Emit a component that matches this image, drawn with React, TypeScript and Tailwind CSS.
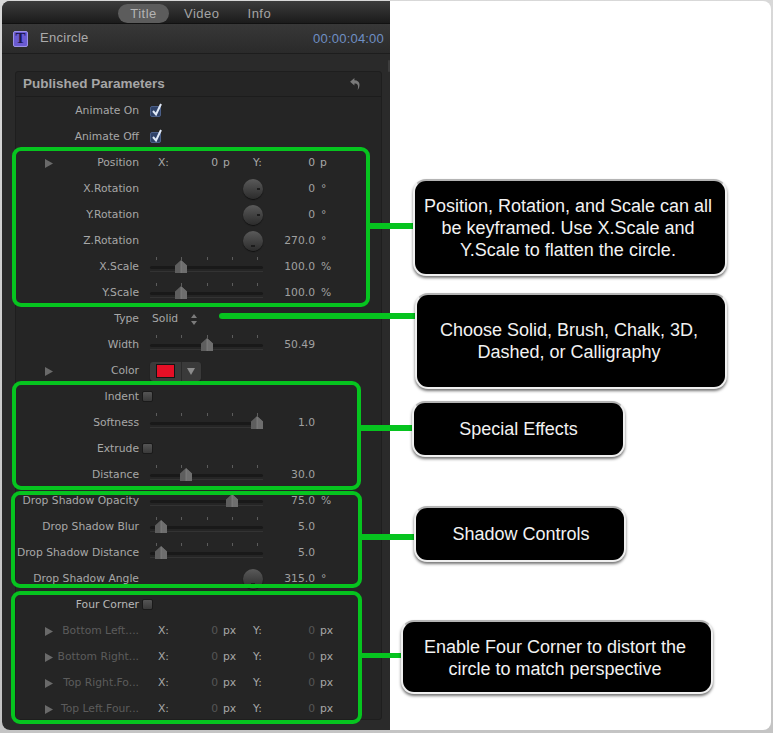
import React from 'react';

const labelFont = "font-['DejaVu_Sans',sans-serif]";

type Param =
  | { kind: 'check'; label: string; checked?: boolean; bright?: boolean }
  | { kind: 'xy'; label: string; unit: string; dim?: boolean }
  | { kind: 'dial'; label: string; value: string; unit?: string; dot: string }
  | { kind: 'slider'; label: string; value: string; unit?: string; thumb: number }
  | { kind: 'type'; label: string }
  | { kind: 'color'; label: string };

const params: Param[] = [
  { kind: 'check', label: 'Animate On', checked: true },
  { kind: 'check', label: 'Animate Off', checked: true },
  { kind: 'xy', label: 'Position', unit: 'p' },
  { kind: 'dial', label: 'X.Rotation', value: '0', unit: '°', dot: 'right' },
  { kind: 'dial', label: 'Y.Rotation', value: '0', unit: '°', dot: 'right' },
  { kind: 'dial', label: 'Z.Rotation', value: '270.0', unit: '°', dot: 'bottom' },
  { kind: 'slider', label: 'X.Scale', value: '100.0', unit: '%', thumb: 31 },
  { kind: 'slider', label: 'Y.Scale', value: '100.0', unit: '%', thumb: 31 },
  { kind: 'type', label: 'Type' },
  { kind: 'slider', label: 'Width', value: '50.49', thumb: 57 },
  { kind: 'color', label: 'Color' },
  { kind: 'check', label: 'Indent' },
  { kind: 'slider', label: 'Softness', value: '1.0', thumb: 107 },
  { kind: 'check', label: 'Extrude' },
  { kind: 'slider', label: 'Distance', value: '30.0', thumb: 36 },
  { kind: 'slider', label: 'Drop Shadow Opacity', value: '75.0', unit: '%', thumb: 82 },
  { kind: 'slider', label: 'Drop Shadow Blur', value: '5.0', thumb: 11 },
  { kind: 'slider', label: 'Drop Shadow Distance', value: '5.0', thumb: 11 },
  { kind: 'dial', label: 'Drop Shadow Angle', value: '315.0', unit: '°', dot: 'bottom' },
  { kind: 'check', label: 'Four Corner', bright: true },
  { kind: 'xy', label: 'Bottom Left....', unit: 'px', dim: true },
  { kind: 'xy', label: 'Bottom Right...', unit: 'px', dim: true },
  { kind: 'xy', label: 'Top Right.Fo...', unit: 'px', dim: true },
  { kind: 'xy', label: 'Top Left.Four...', unit: 'px', dim: true },
];

const Disclosure = () => (
  <svg width="8" height="9" viewBox="0 0 8 9" className="absolute left-[30px] top-[9px]">
    <path d="M0 0 L8 4.5 L0 9 Z" fill="#6a6a6a" />
  </svg>
);

const Slider = ({ thumb }: { thumb: number }) => (
  <div className="relative w-[113px] h-[26px]">
    {[6, 31, 57, 82, 107].map((x) => (
      <div key={x} className="absolute top-[3px] w-px h-[3px] bg-[#5c5c5c]" style={{ left: x }} />
    ))}
    <div className="absolute left-0 right-0 top-[12px] h-[3px] rounded-full bg-[#191919]" />
    <div className="absolute left-0 right-0 top-[17px] h-px bg-[#333333]" />
    <svg width="12" height="13" viewBox="0 0 12 13" className="absolute top-[6px]" style={{ left: thumb - 6 }}>
      <path d="M6 0 L12 5.5 V13 H0 V5.5 Z" fill="#5e5e5e" />
      <path d="M6 0 L12 5.5 V13 H6 Z" fill="#6e6e6e" />
      <path d="M6 1 V13" stroke="#8a8a8a" strokeWidth="0.6" />
    </svg>
  </div>
);

const Dial = ({ dot }: { dot: string }) => (
  <div className="relative w-[113px] h-[26px]">
    <div className="absolute left-[93px] top-[3px] w-5 h-5 rounded-full bg-gradient-to-b from-[#5a5a5a] to-[#2c2c2c] shadow-[0_1px_1px_#111111]">
      {dot === 'right' ? (
        <div className="absolute right-[3px] top-[9px] w-[3px] h-[2px] bg-[#1c1c1c]" />
      ) : (
        <div className="absolute left-[8px] bottom-[4px] w-[4px] h-[2px] bg-[#1c1c1c]" />
      )}
    </div>
  </div>
);

const Checkbox = ({ checked }: { checked?: boolean }) =>
  checked ? (
    <div className="relative w-[11px] h-[11px] ml-[11px] mt-[1px] rounded-[2px] bg-[#2f4268] border border-[#4b5f88]">
      <svg width="14" height="15" viewBox="0 0 14 15" className="absolute left-[-1px] top-[-5px]">
        <path d="M3 9 L6 12.5 L11 2" fill="none" stroke="#dfe8f6" strokeWidth="2" />
      </svg>
    </div>
  ) : (
    <div className="w-[11px] h-[11px] ml-[3px] mb-[2px] rounded-[2px] bg-gradient-to-b from-[#555555] to-[#3a3a3a] border border-[#1a1a1a]" />
  );

const ValueUnit = ({ value, unit }: { value: string; unit?: string }) => (
  <>
    <span className="w-[52px] text-right text-[#a0a0a0]">{value}</span>
    {unit && <span className="ml-[6px] text-[#a0a0a0]">{unit}</span>}
  </>
);

const XY = ({ unit, dim }: { unit: string; dim?: boolean }) => (
  <div className="flex items-center ml-[19px] text-[#a8a8a8]">
    <span className="w-[52px]">X:</span>
    <span className={`w-[8px] text-right ${dim ? 'text-[#555555]' : ''}`}>0</span>
    <span className="ml-[5px] w-[30px]">{unit}</span>
    <span className="w-[50px]">Y:</span>
    <span className={`w-[12px] text-right ${dim ? 'text-[#555555]' : ''}`}>0</span>
    <span className="ml-[5px]">{unit}</span>
  </div>
);

const ParamRow = ({ p }: { p: Param }) => {
  const dim = p.kind === 'xy' && p.dim;
  const hasArrow = p.kind === 'color' || p.kind === 'xy';
  const bright = p.kind === 'check' && p.bright;
  return (
    <div className={`relative flex items-center h-[26px] text-[10.75px] whitespace-nowrap ${labelFont}`}>
      {hasArrow && <Disclosure />}
      <div className={`w-[124px] text-right ${dim ? 'text-[#5c5c5c]' : bright ? 'text-[#b8b8b8]' : 'text-[#a8a8a8]'}`}>
        {p.label}
      </div>
      {p.kind === 'check' && <Checkbox checked={p.checked} />}
      {p.kind === 'xy' && <XY unit={p.unit} dim={p.dim} />}
      {p.kind === 'dial' && (
        <div className="flex items-center ml-[11px]">
          <Dial dot={p.dot} />
          <ValueUnit value={p.value} unit={p.unit} />
        </div>
      )}
      {p.kind === 'slider' && (
        <div className="flex items-center ml-[11px]">
          <Slider thumb={p.thumb} />
          <ValueUnit value={p.value} unit={p.unit} />
        </div>
      )}
      {p.kind === 'type' && (
        <div className="flex items-center ml-[13px] text-[#a8a8a8]">
          <span>Solid</span>
          <svg width="6" height="11" viewBox="0 0 6 11" className="ml-[13px]">
            <path d="M3 0 L6 4 H0 Z M3 11 L0 7 H6 Z" fill="#7c7c7c" />
          </svg>
        </div>
      )}
      {p.kind === 'color' && (
        <div className="flex items-center ml-[11px] w-[51px] h-[19px] rounded-[3px] bg-[#3a3a3a] shadow-[0_1px_1px_#151515]">
          <div className="w-[19px] h-[14px] ml-[6px] bg-[#e60f26] border border-[#141414]" />
          <div className="ml-[6px] h-full w-px bg-[#2a2a2a]" />
          <svg width="8" height="7" viewBox="0 0 8 7" className="ml-[5px]">
            <path d="M0 0 H8 L4 7 Z" fill="#8c8c8c" />
          </svg>
        </div>
      )}
    </div>
  );
};

const greenBoxes = [
  'left-[12px] top-[147px] w-[358px] h-[160px]',
  'left-[12px] top-[381px] w-[349px] h-[109px]',
  'left-[11px] top-[491px] w-[351px] h-[97px]',
  'left-[11px] top-[591px] w-[351px] h-[133px]',
];

const connectors = [
  'left-[366px] top-[223px] w-[48px] h-[6px]',
  'left-[219px] top-[313px] w-[197px] h-[6px] rounded-l-full',
  'left-[359px] top-[425px] w-[54px] h-[6px]',
  'left-[358px] top-[534px] w-[57px] h-[6px]',
  'left-[360px] top-[653px] w-[42px] h-[5px]',
];

const callouts = [
  {
    pos: 'left-[413px] top-[179px] w-[314px] h-[97px] pr-[4px]',
    lines: ['Position, Rotation, and Scale can all', 'be keyframed. Use X.Scale and', 'Y.Scale to flatten the circle.'],
  },
  {
    pos: 'left-[415px] top-[293px] w-[312px] h-[96px] pr-[4px]',
    lines: ['Choose Solid, Brush, Chalk, 3D,', 'Dashed, or Calligraphy'],
  },
  { pos: 'left-[412px] top-[401px] w-[213px] h-[56px]', lines: ['Special Effects'] },
  { pos: 'left-[414px] top-[506px] w-[212px] h-[56px] pl-[2px]', lines: ['Shadow Controls'] },
  {
    pos: 'left-[401px] top-[620px] w-[312px] h-[74px] pr-[4px] pt-[2px]',
    lines: ['Enable Four Corner to distort the', 'circle to match perspective'],
  },
];

export default function App() {
  return (
    <div className="relative w-[773px] h-[733px] overflow-hidden bg-gradient-to-b from-[#d8d8d8] to-[#c4c4c4]">
      <div className="flex ml-[2px] mt-[1px] w-[769px] h-[729px] rounded-[8px] overflow-hidden bg-white">
        <div className="flex flex-col w-[388px] h-full bg-[#2a2a2a]">
          <div className="flex shrink-0 items-center h-[23px] pt-[3px] pl-[116px] bg-gradient-to-b from-[#3c3c3c] to-[#1b1b1b] border-b border-[#111111] text-[13px] text-[#a4a4a4] tracking-[0.5px] font-['Liberation_Sans',sans-serif]">
            <span className="w-[51px] text-center rounded-full bg-[#5c5c5c] text-[#b4b4b4]">Title</span>
            <span className="ml-[15px]">Video</span>
            <span className="ml-[28px]">Info</span>
          </div>
          <div className="flex shrink-0 items-center h-[30px] pl-[11px] pr-[6px] bg-gradient-to-b from-[#383838] to-[#2a2a2a] border-b border-[#1d1d1d]">
            <div className="flex items-center justify-center w-[15px] h-[16px] rounded-[2px] bg-[#6a5ad2] border border-[#9c92e6] text-[15px] leading-none font-bold text-[#1c1850] font-['Liberation_Serif',serif]">
              T
            </div>
            <span className="ml-[12px] pb-[2px] text-[13px] text-[#ababab] tracking-[0.3px] font-['Liberation_Sans',sans-serif]">Encircle</span>
            <span className="ml-auto text-[13px] text-[#6f8fc4] tracking-[0.2px] font-['Liberation_Sans',sans-serif]">00:00:04:00</span>
          </div>
          <div className="flex-1 min-h-0 flex pl-[13px] pt-[17px]">
            <div className="w-[367px] h-[649px] rounded-[3px] bg-[#252525] border border-[#1e1e1e]">
              <div className="flex items-center justify-between h-[25px] pl-[7px] pr-[20px] border-b border-[#1c1c1c]">
                <span className="text-[13.5px] font-bold text-[#a6a6a6] font-['Liberation_Sans',sans-serif]">Published Parameters</span>
                <svg width="11" height="13" viewBox="0 0 10 12">
                  <path d="M4 0 L0 3.5 L4 7 V5 C7 5 8 6.5 7 11 C9.5 8 10 2.2 4 2 Z" fill="#7a7a7a" />
                </svg>
              </div>
              <div className="-ml-px pt-px">
                {params.map((p) => (
                  <ParamRow key={p.label} p={p} />
                ))}
              </div>
            </div>
            <div className="w-[2px] h-[12px] ml-[6px] -mt-[11px] rounded-full bg-[#3c3c3c]" />
          </div>
        </div>
      </div>

      {/* annotations drawn over the screenshot */}
      {connectors.map((c) => (
        <div key={c} className={`absolute bg-[#06c41f] ${c}`} />
      ))}
      {greenBoxes.map((b) => (
        <div key={b} className={`absolute rounded-[9px] border-4 border-[#06c41f] ${b}`} />
      ))}
      {callouts.map((c) => (
        <div
          key={c.pos}
          className={`absolute flex flex-col items-center justify-center rounded-[13px] bg-black border-2 border-[#f0f0f0] border-t-[#b4b4b4] shadow-[0_2px_3px_rgba(0,0,0,0.55)] text-[18px] leading-[22px] whitespace-nowrap text-[#f2f2f2] font-['Liberation_Sans',sans-serif] ${c.pos}`}
        >
          {c.lines.map((line) => (
            <span key={line}>{line}</span>
          ))}
        </div>
      ))}
    </div>
  );
}
